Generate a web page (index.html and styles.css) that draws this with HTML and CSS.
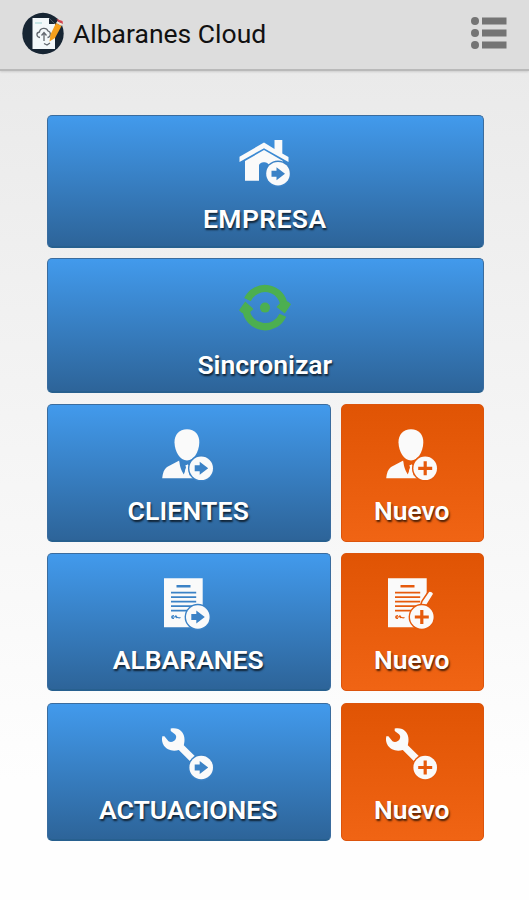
FILE: index.html
```html
<!DOCTYPE html>
<html lang="es">
<head>
    <meta charset="UTF-8">
    <meta name="viewport" content="width=device-width, initial-scale=1.0">
    <title>Albaranes Cloud</title>
    <link rel="stylesheet" href="styles.css">
</head>
<body>

<!-- shared icon shapes -->
<svg class="sprite" width="0" height="0">
    <symbol id="arrow" viewBox="-14 -14 28 28">
        <circle class="halo" r="13.2"/>
        <circle r="11.8"/>
        <path class="ink" d="M-6.5 -3H-1.500V-6.500L7 0L-1.500 6.500V3H-6.500Z"/>
    </symbol>
    <symbol id="plus" viewBox="-14 -14 28 28">
        <circle class="halo" r="13.2"/>
        <circle r="11.8"/>
        <path class="ink" d="M-1.6 -7H1.6V-1.6H7V1.6H1.6V7H-1.6V1.6H-7V-1.6H-1.6Z"/>
    </symbol>
    <symbol id="person" viewBox="0 0 54 54">
        <path d="M26 1.300C34 1.300 38.500 7 38.300 14.500C38 24 33 32.500 26 32.500C19 32.500 13.800 24 13.500 14.500C13.300 7 18 1.300 26 1.300Z"/>
        <path d="M1.2 50.3C1.7 45 3 41.5 6 39L18.3 32.5L23 46L26 36.5H29L34 34L42 40V50.3Z"/>
        <path class="ink" d="M18.3 31.5C18.500 38 20 42 22.8 46.5L24.500 38Z"/>
        <path class="ink" d="M26 34.500H34L29 48L27.500 44L28 38Z"/>
        <path d="M24.500 37H27.500L27 40L28 46H23.500L25 40Z"/>
    </symbol>
    <symbol id="doc" viewBox="0 0 54 54">
        <path d="M3 1.3H41.7V50.3H3Z"/>
        <path class="ink" d="M15.5 8H29.5V10.5H15.5Z"/>
        <path class="rule" d="M10 15.7H35.2M10 20.2H35.2M10 24.7H35.2M10 29.2H35.2M10 33.7H30"/>
        <path class="sign" d="M13 38.5C10 38.500 10 41.500 13 41.500M11 40H14C15 38 15.500 39 15.500 41C16.500 39 17 42 19.5 40.500"/>
    </symbol>
    <symbol id="wrench" viewBox="0 0 54 54">
        <path d="M9.7 1.5C14 0.6 18 1.5 20.5 4.5C23.500 8 24.300 12.500 22.800 18.200L34 29.200L28.800 34L17.800 22.900C11.500 25 5.500 22.500 2.800 18.500C1 15.800 0.600 12.500 1.300 9.300H3.400L7.500 14.200C10 15.800 13.500 14.500 14.700 12C15.600 10 15.200 8.500 14 7.300L9.700 4Z"/>
    </symbol>
</svg>

<header class="topbar">
    <svg class="logo" viewBox="0 0 43 43">
        <circle cx="21" cy="21.5" r="20.7" fill="#172533"/>
        <path d="M10.5 6H27L33 12V37H10.5Z" fill="#f3f8fa"/>
        <path d="M27 6V12H33Z" fill="#172533"/>
        <path d="M13 11H20" stroke="#b9dfdf" stroke-width="1.5"/>
        <path d="M18 25.5C14 25 14 20.5 17.5 20C18 15.5 24.5 15 26 19C29.5 20 29 25 25.5 25.5M22 29V20.5M19.5 23.5L22 20.5L24.5 23.5M22 31.5L25 33L28 31" fill="none" stroke="#62686f" stroke-width="1.3"/>
        <path d="M28.5 22.5L34 11L39.5 14L33 26L27.5 29.5Z" fill="#f6a01c"/>
        <path d="M34 11L35.5 9L40.5 12L39.5 14Z" fill="#f3e5d3"/>
        <path d="M34.5 7L40.5 9L41 12L36 9.5Z" fill="#d9434c"/>
    </svg>
    <h1>Albaranes Cloud</h1>
    <svg class="menu-icon" viewBox="0 0 36 34">
        <circle cx="4" cy="5" r="4"/>
        <circle cx="4" cy="17" r="4"/>
        <circle cx="4" cy="29" r="4"/>
        <path d="M11 1.500H35.500V8.500H11ZM11 13.500H35.500V20.500H11ZM11 25.500H35.500V32.500H11Z"/>
    </svg>
</header>

<main class="menu">
    <button class="tile wide company">
        <svg class="icon" viewBox="0 0 54 54">
            <path d="M26 4.5L36.500 11V2H44.300V15.500L50.500 19V24L26 10.200L1.500 24V18.800Z"/>
            <path d="M26 12L45 23V42.700H31V28C31 23 21 23 21 28V42.700H7V23Z"/>
            <use href="#arrow" x="26" y="21.7" width="28" height="28"/>
        </svg>
        <span>EMPRESA</span>
    </button>
    <button class="tile wide sync">
        <svg class="icon" viewBox="0 0 54 54">
            <g class="green">
                <circle cx="27" cy="23.6" r="5"/>
                <path class="ring" d="M9.5 15.6A19.3 19.3 0 0 1 46.2 22"/>
                <path class="ring" d="M44.8 31.200A19.300 19.300 0 0 1 7.900 25"/>
                <path d="M38.500 23L43 18L50 17.500L53 20.300L46.800 29.500Z"/>
                <path d="M15.500 25L11 29L4 29L1 26.300L7.200 17.500Z"/>
            </g>
        </svg>
        <span>Sincronizar</span>
    </button>
    <button class="tile clients">
        <svg class="icon" viewBox="0 0 54 54">
            <use href="#person"/>
            <use href="#arrow" x="26.2" y="26.3" width="28" height="28"/>
        </svg>
        <span>CLIENTES</span>
    </button>
    <button class="tile new clients">
        <svg class="icon" viewBox="0 0 54 54">
            <use href="#person"/>
            <use href="#plus" x="26.2" y="26.3" width="28" height="28"/>
        </svg>
        <span>Nuevo</span>
    </button>
    <button class="tile notes">
        <svg class="icon" viewBox="0 0 54 54">
            <use href="#doc"/>
            <use href="#arrow" x="22.8" y="26" width="28" height="28"/>
        </svg>
        <span>ALBARANES</span>
    </button>
    <button class="tile new notes">
        <svg class="icon" viewBox="0 0 54 54">
            <use href="#doc"/>
            <path class="pen" d="M35.5 28.5L37 24L43.5 14.5C45 13 49.5 15 48.5 17.5L42 28Z"/>
            <use href="#plus" x="22.8" y="26" width="28" height="28"/>
        </svg>
        <span>Nuevo</span>
    </button>
    <button class="tile jobs">
        <svg class="icon" viewBox="0 0 54 54">
            <use href="#wrench"/>
            <use href="#arrow" x="26.2" y="26.5" width="28" height="28"/>
        </svg>
        <span>ACTUACIONES</span>
    </button>
    <button class="tile new jobs">
        <svg class="icon" viewBox="0 0 54 54">
            <use href="#wrench"/>
            <use href="#plus" x="26.2" y="26.500" width="28" height="28"/>
        </svg>
        <span>Nuevo</span>
    </button>
</main>

</body>
</html>
```
FILE: styles.css
```css
body {
    margin: 0;
    min-height: 100vh;
    font-family: Roboto, sans-serif;
    background: linear-gradient(#eaeaea 70px, #f5f5f5 450px, #fefefe 780px);
}
.sprite {
    display: block;
}
.topbar {
    display: flex;
    align-items: center;
    height: 71px;
    padding: 0 22px 3px 22px;
    box-sizing: border-box;
    background: #dddddd;
    border-bottom: 2px solid #b9b9b9;
    box-shadow: 0 1px 2px rgba(0, 0, 0, 0.12);
}
.logo {
    width: 43px;
    height: 43px;
}
.topbar h1 {
    flex: 1;
    margin: 1px 0 0 8px;
    font-size: 26.5px;
    font-weight: 400;
    color: #111;
    white-space: nowrap;
}
.menu-icon {
    width: 36px;
    height: 34px;
    fill: #747474;
}
.menu {
    display: grid;
    grid-template-columns: 283.5px 142.5px;
    grid-template-rows: 133px 135px 139px 139px 140px;
    gap: 10px 10.5px;
    width: 436.5px;
    padding: 44px 0 0 47px;
}
.tile {
    --tile: #3b82c6;
    display: flex;
    flex-direction: column;
    align-items: center;
    margin: 1px 0 0;
    padding: 23px 1px 0 0;
    border: 1px solid #3a6c9e;
    border-bottom: 2px solid #27608f;
    border-radius: 5px;
    background: linear-gradient(#429aec, #2d6499);
    color: #fff;
    font-family: inherit;
    font-size: 26.5px;
    font-weight: 600;
    line-height: 30px;
    text-shadow: 1px 2px 2px rgba(0, 0, 0, 0.7);
}
.wide {
    grid-column: span 2;
    margin-top: 0;
}
.company {
    padding-top: 22px;
    letter-spacing: 0.4px;
}
.sync {
    padding-top: 25px;
}
.clients {
    letter-spacing: 0.2px;
}
.jobs {
    margin-top: 2px;
}
.new {
    --tile: #e65a0c;
    border: 1px solid #dc540c;
    background: linear-gradient(#e05404, #f06414);
    letter-spacing: normal;
}
.icon {
    width: 54px;
    height: 54px;
    margin-bottom: 14px;
    fill: #fafafa;
    flex: none;
}
.wide .icon {
    margin-bottom: 12px;
}
.halo, .ink {
    fill: var(--tile);
}
.rule, .sign {
    fill: none;
    stroke: var(--tile);
    stroke-width: 1.8;
}
.sign {
    stroke-width: 1.2;
}
.pen {
    stroke: var(--tile);
    stroke-width: 1.5;
}
.green {
    fill: #4caf50;
}
.ring {
    fill: none;
    stroke: #4caf50;
    stroke-width: 7.3;
}
```
